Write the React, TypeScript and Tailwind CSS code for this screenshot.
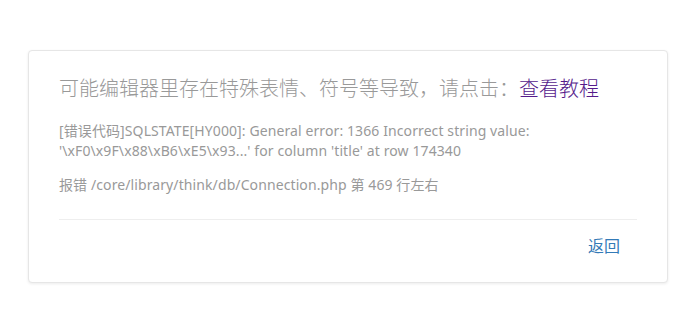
export default function App() {
  const font = { fontFamily: '"Segoe UI", "Noto Sans", "Noto Sans CJK SC", sans-serif' };
  return (
    <div className="min-h-[326px] w-[699px] bg-white" style={font}>
      <div className="h-[50px]" />
      <div className="ml-[28px] w-[640px] rounded-[4px] border border-[#e6e6e6] bg-white px-[30px] pt-[27px] pb-[25px] shadow-[0_1px_3px_rgba(0,0,0,0.08)]">
        <h1 className="text-[20px] leading-[22px] text-[#999] font-light">
          可能编辑器里存在特殊表情、符号等导致，请点击：<a href="#" className="text-[#551a8b]">查看教程</a>
        </h1>
        <p className="mt-[21px] text-[14px] leading-[20px] text-[#999] tracking-[0.1px]">
          [错误代码]SQLSTATE[HY000]: General error: 1366 Incorrect string value: '\xF0\x9F\x88\xB6\xE5\x93...' for column 'title' at row 174340
        </p>
        <p className="mt-[14px] text-[14px] leading-[20px] text-[#999] tracking-[0.1px]">
          报错 /core/library/think/db/Connection.php 第 469 行左右
        </p>
        <div className="mt-[24px] border-t border-[#eee]" />
        <div className="flex justify-end pt-[15px] pr-[17px]">
          <a href="#" className="text-[16px] leading-[22px] text-[#337ab7]">返回</a>
        </div>
      </div>
    </div>
  );
}
